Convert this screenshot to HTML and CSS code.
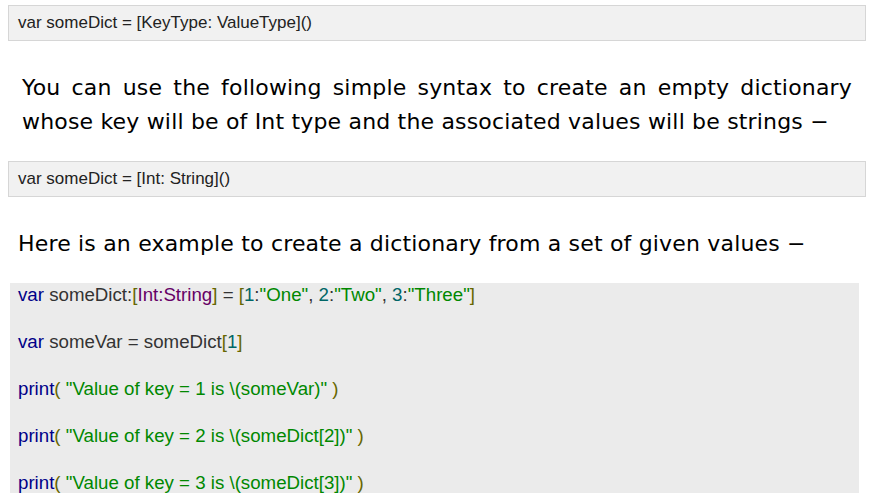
FILE: index.html
```html
<!DOCTYPE html>
<html>
<head>
<meta charset="utf-8">
<link rel="stylesheet" href="styles.css">
</head>
<body>
<div class="page">
  <div class="box box-first">var someDict = [KeyType: ValueType]()</div>
  <p class="para para-just">You can use the following simple syntax to create an empty dictionary whose key will be of Int type and the associated values will be strings −</p>
  <div class="box">var someDict = [Int: String]()</div>
  <p class="para para-plain">Here is an example to create a dictionary from a set of given values −</p>
  <div class="code">
    <div class="line"><span class="kwd">var</span> someDict:<span class="pun">[</span><span class="typ">Int:String</span><span class="pun">]</span> = <span class="pun">[</span><span class="lit">1</span>:<span class="str">"One"</span>, <span class="lit">2</span>:<span class="str">"Two"</span>, <span class="lit">3</span>:<span class="str">"Three"</span><span class="pun">]</span></div>
    <div class="line"><span class="kwd">var</span> someVar = someDict<span class="pun">[</span><span class="lit">1</span><span class="pun">]</span></div>
    <div class="line"><span class="kwd">print</span><span class="pun">(</span> <span class="str">"Value of key = 1 is \(someVar)"</span> <span class="pun">)</span></div>
    <div class="line"><span class="kwd">print</span><span class="pun">(</span> <span class="str">"Value of key = 2 is \(someDict[2])"</span> <span class="pun">)</span></div>
    <div class="line"><span class="kwd">print</span><span class="pun">(</span> <span class="str">"Value of key = 3 is \(someDict[3])"</span> <span class="pun">)</span></div>
  </div>
</div>
</body>
</html>
```
FILE: styles.css
```css
html, body {
  margin: 0;
  padding: 0;
  background: #ffffff;
}
.page {
  padding: 5px 14px 0 8px;
  font-family: "Liberation Sans", Arial, sans-serif;
  color: #313131;
}
.box {
  background: #f1f1f1;
  border: 1px solid #d6d6d6;
  height: 34px;
  line-height: 34px;
  padding: 0 9px;
  font-size: 17px;
  color: #222;
}
.para {
  font-family: "DejaVu Sans", Verdana, sans-serif;
  font-size: 22px;
  line-height: 34px;
  letter-spacing: 0.18px;
  color: #000;
  margin: 0;
}
.para-just {
  text-align: justify;
  padding: 30px 14px 0 14px;
  margin-bottom: 22px;
}
.para-plain {
  padding: 30px 0 0 10px;
  margin-bottom: 22px;
}
.code {
  background: #ebebeb;
  margin: 0 7px 0 2px;
  padding: 0 8px;
  height: 210px;
  overflow: hidden;
  font-size: 18.7px;
  color: #333;
}
.line {
  line-height: 24px;
  margin-bottom: 23px;
  white-space: pre;
}
.kwd { color: #000088; }
.pun { color: #666600; }
.typ { color: #660066; }
.lit { color: #006666; }
.str { color: #008800; }
```
